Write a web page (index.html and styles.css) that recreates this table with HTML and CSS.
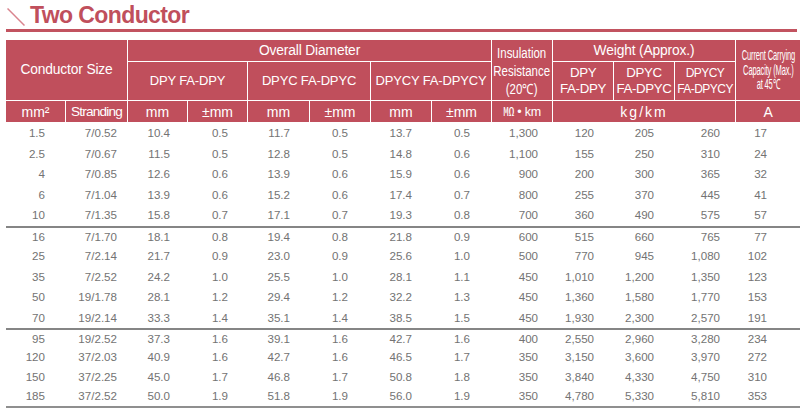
FILE: index.html
```html
<!DOCTYPE html>
<html lang="en">
<head>
<meta charset="utf-8">
<title>Two Conductor</title>
<link rel="stylesheet" href="styles.css">
</head>
<body>
<div class="title">
  <svg class="slash" width="18" height="18" viewBox="0 0 18 18"><line x1="0.5" y1="0.5" x2="17.5" y2="17.5" stroke="#d9848e" stroke-width="1.5"/></svg>
  <span class="title-text">Two Conductor</span>
</div>
<table class="spec">
  <colgroup>
    <col class="w60"><col class="w62"><col class="w60"><col class="w60"><col class="w62"><col class="w61"><col class="w61"><col class="w60"><col class="w61"><col class="w61"><col class="w61"><col class="w61"><col class="w64">
  </colgroup>
  <thead>
    <tr class="h1">
      <th colspan="2" rowspan="2" class="big">Conductor Size</th>
      <th colspan="6" class="big">Overall Diameter</th>
      <th rowspan="2" class="ins"><span class="squeeze">Insulation<br>Resistance<br>(20℃)</span></th>
      <th colspan="3" class="big">Weight (Approx.)</th>
      <th rowspan="2" class="cur last"><span class="narrow">Current Carrying<br>Capacity (Max.)<br>at 45℃</span></th>
    </tr>
    <tr class="h2">
      <th colspan="2" class="mid">DPY FA-DPY</th>
      <th colspan="2" class="mid">DPYC FA-DPYC</th>
      <th colspan="2" class="mid">DPYCY FA-DPYCY</th>
      <th class="wt">DPY<br>FA-DPY</th>
      <th class="wt">DPYC<br>FA-DPYC</th>
      <th class="wt small">DPYCY<br>FA-DPYCY</th>
    </tr>
    <tr class="h3">
      <th class="unit">mm²</th>
      <th class="unit tight">Stranding</th>
      <th class="unit">mm</th>
      <th class="unit">±mm</th>
      <th class="unit">mm</th>
      <th class="unit">±mm</th>
      <th class="unit">mm</th>
      <th class="unit">±mm</th>
      <th class="unit ohm"><span class="cjk">㏁</span> • km</th>
      <th colspan="3" class="unit kg">kg/km</th>
      <th class="unit last">A</th>
    </tr>
  </thead>
  <tbody>
    <tr class="r"><td>1.5</td><td>7/0.52</td><td>10.4</td><td>0.5</td><td>11.7</td><td>0.5</td><td>13.7</td><td>0.5</td><td>1,300</td><td>120</td><td>205</td><td>260</td><td>17</td></tr>
    <tr class="r"><td>2.5</td><td>7/0.67</td><td>11.5</td><td>0.5</td><td>12.8</td><td>0.5</td><td>14.8</td><td>0.6</td><td>1,100</td><td>155</td><td>250</td><td>310</td><td>24</td></tr>
    <tr class="r"><td>4</td><td>7/0.85</td><td>12.6</td><td>0.6</td><td>13.9</td><td>0.6</td><td>15.9</td><td>0.6</td><td>900</td><td>200</td><td>300</td><td>365</td><td>32</td></tr>
    <tr class="r"><td>6</td><td>7/1.04</td><td>13.9</td><td>0.6</td><td>15.2</td><td>0.6</td><td>17.4</td><td>0.7</td><td>800</td><td>255</td><td>370</td><td>445</td><td>41</td></tr>
    <tr class="r"><td>10</td><td>7/1.35</td><td>15.8</td><td>0.7</td><td>17.1</td><td>0.7</td><td>19.3</td><td>0.8</td><td>700</td><td>360</td><td>490</td><td>575</td><td>57</td></tr>
    <tr class="r sep"><td>16</td><td>7/1.70</td><td>18.1</td><td>0.8</td><td>19.4</td><td>0.8</td><td>21.8</td><td>0.9</td><td>600</td><td>515</td><td>660</td><td>765</td><td>77</td></tr>
    <tr class="r"><td>25</td><td>7/2.14</td><td>21.7</td><td>0.9</td><td>23.0</td><td>0.9</td><td>25.6</td><td>1.0</td><td>500</td><td>770</td><td>945</td><td>1,080</td><td>102</td></tr>
    <tr class="r"><td>35</td><td>7/2.52</td><td>24.2</td><td>1.0</td><td>25.5</td><td>1.0</td><td>28.1</td><td>1.1</td><td>450</td><td>1,010</td><td>1,200</td><td>1,350</td><td>123</td></tr>
    <tr class="r"><td>50</td><td>19/1.78</td><td>28.1</td><td>1.2</td><td>29.4</td><td>1.2</td><td>32.2</td><td>1.3</td><td>450</td><td>1,360</td><td>1,580</td><td>1,770</td><td>153</td></tr>
    <tr class="r"><td>70</td><td>19/2.14</td><td>33.3</td><td>1.4</td><td>35.1</td><td>1.4</td><td>38.5</td><td>1.5</td><td>450</td><td>1,930</td><td>2,300</td><td>2,570</td><td>191</td></tr>
    <tr class="s sep"><td>95</td><td>19/2.52</td><td>37.3</td><td>1.6</td><td>39.1</td><td>1.6</td><td>42.7</td><td>1.6</td><td>400</td><td>2,550</td><td>2,960</td><td>3,280</td><td>234</td></tr>
    <tr class="s"><td>120</td><td>37/2.03</td><td>40.9</td><td>1.6</td><td>42.7</td><td>1.6</td><td>46.5</td><td>1.7</td><td>350</td><td>3,150</td><td>3,600</td><td>3,970</td><td>272</td></tr>
    <tr class="s"><td>150</td><td>37/2.25</td><td>45.0</td><td>1.7</td><td>46.8</td><td>1.7</td><td>50.8</td><td>1.8</td><td>350</td><td>3,840</td><td>4,330</td><td>4,750</td><td>310</td></tr>
    <tr class="s end"><td>185</td><td>37/2.52</td><td>50.0</td><td>1.9</td><td>51.8</td><td>1.9</td><td>56.0</td><td>1.9</td><td>350</td><td>4,780</td><td>5,330</td><td>5,810</td><td>353</td></tr>
  </tbody>
</table>
</body>
</html>
```

FILE: styles.css
```css
html, body {
  margin: 0;
  padding: 0;
  background: #ffffff;
}

body {
  font-family: "Liberation Sans", Arial, sans-serif;
  width: 807px;
  height: 417px;
  overflow: hidden;
}

.title {
  display: flex;
  align-items: flex-start;
  margin: 0 10px 0 6px;
  padding-top: 2px;
  height: 27px;
  border-bottom: 3px solid #c25360;
}

.slash {
  display: block;
  margin: 6px 5px 0 1px;
  flex: none;
}

.title-text {
  font-size: 23px;
  line-height: 27px;
  font-weight: bold;
  letter-spacing: -0.6px;
  color: #c04f5c;
}

.spec {
  margin: 8px 0 0 6px;
  width: 794px;
  table-layout: fixed;
  border-collapse: separate;
  border-spacing: 0;
}

.w60 { width: 60px; }
.w61 { width: 61px; }
.w62 { width: 62px; }
.w64 { width: 64px; }

.spec th {
  background: #c04f5c;
  color: #ffffff;
  font-weight: normal;
  padding: 0;
  text-align: center;
  vertical-align: middle;
  border-right: 1px solid #ffffff;
  border-bottom: 1px solid #ffffff;
  white-space: nowrap;
  overflow: visible;
}

.spec th.last {
  border-right: none;
}

.h1 { height: 22px; }
.h2 { height: 39px; }
.h3 { height: 22px; }

.big {
  font-size: 13.8px;
  letter-spacing: -0.15px;
  line-height: 16px;
}

.mid {
  font-size: 13px;
  letter-spacing: -0.15px;
  line-height: 16px;
}

.ins {
  font-size: 14px;
  line-height: 18px;
}

.squeeze {
  display: inline-block;
  transform: scaleX(0.82);
  transform-origin: center;
  margin: 0 -10px;
  padding-top: 1px;
}

.wt {
  font-size: 13.3px;
  letter-spacing: -0.35px;
  line-height: 16.5px;
}

.wt.small {
  font-size: 12px;
  letter-spacing: -0.55px;
}

.cur {
  font-size: 14px;
  line-height: 14.5px;
}

.narrow {
  display: inline-block;
  transform: scaleX(0.54);
  transform-origin: center;
  letter-spacing: -0.3px;
  margin: 0 -30px;
}

.unit {
  font-size: 14px;
  line-height: 16px;
}

.unit.tight {
  font-size: 13.6px;
  letter-spacing: -0.8px;
}

.ohm {
  font-size: 12.5px;
  letter-spacing: -0.2px;
}

.cjk {
  font-family: "Noto Sans CJK JP", "Noto Sans CJK SC", sans-serif;
  font-size: 11px;
}

.kg {
  letter-spacing: 2px;
  font-size: 14px;
}

.spec td {
  padding: 0;
  font-size: 11.6px;
  line-height: 14px;
  color: #737373;
  text-align: right;
  vertical-align: middle;
}

.r { height: 20.5px; }
.s { height: 19.5px; }
.s.end { height: 21.5px; }

.sep td {
  border-top: 2px solid #858585;
}

.end td {
  border-bottom: 2px solid #8f8f8f;
}

.spec td:nth-child(1)  { padding-right: 21px; }
.spec td:nth-child(2)  { padding-right: 11px; }
.spec td:nth-child(3)  { padding-right: 18px; }
.spec td:nth-child(4)  { padding-right: 20px; }
.spec td:nth-child(5)  { padding-right: 20px; }
.spec td:nth-child(6)  { padding-right: 23px; }
.spec td:nth-child(7)  { padding-right: 20px; }
.spec td:nth-child(8)  { padding-right: 22px; }
.spec td:nth-child(9)  { padding-right: 15px; }
.spec td:nth-child(10) { padding-right: 20px; }
.spec td:nth-child(11) { padding-right: 21px; }
.spec td:nth-child(12) { padding-right: 16px; }
.spec td:nth-child(13) { padding-right: 33px; }
```
